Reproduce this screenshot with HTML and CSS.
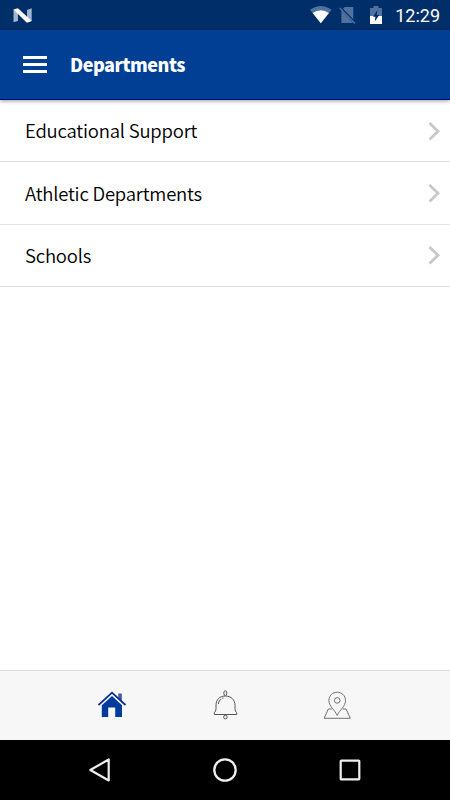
FILE: index.html
```html
<!DOCTYPE html>
<html lang="en">
<head>
<meta charset="UTF-8" />
<meta name="viewport" content="width=device-width, initial-scale=1.0" />
<title>Departments</title>
<link rel="stylesheet" href="styles.css">
</head>
<body>

<!-- Status bar -->
<div class="status-bar">
  <svg class="logo" width="20" height="16" viewBox="0 0 20 16">
    <path d="M0.5 1.5L5 0.8V13L0.5 14.2ZM14 2L18.7 0.2V13L14 14.2Z" fill="#9fb4cf"/>
    <path d="M0.7 1.8Q3 0.2 5.2 0.4L18.5 12.8Q16.5 14.6 13.6 14.4Z" fill="#fff"/>
  </svg>
  <div class="status-icons">
    <svg width="22" height="18" viewBox="0 0 22 18">
      <path d="M0 3.8Q10.8 -3.8 21.6 3.8L10.8 17.2Z" fill="#4f72a0"/>
      <path d="M2.7 7.1Q10.8 1.6 18.9 7.1L10.8 17.2Z" fill="#fff"/>
    </svg>
    <svg class="sim" width="18" height="18" viewBox="0 0 18 18">
      <path d="M4 2.8L5.7 1H14.3V13.2ZM2.4 4.6L14 17H2.4Z" fill="#4f72a0"/>
      <path d="M0.7 2L16 17.4" stroke="#4f72a0" stroke-width="1.4"/>
    </svg>
    <svg class="battery" width="12" height="18" viewBox="0 0 12 18">
      <path d="M0 2H3.5V0H8.5V2H12V10H0Z" fill="#4f72a0"/>
      <path d="M0 10H12V18H0Z" fill="#fff"/>
      <path d="M7.4 4L3 10.8H5.4L4.8 15.6L9.2 9H6.8Z" fill="#002e69"/>
    </svg>
    <span class="clock">12:29</span>
  </div>
</div>

<!-- Header -->
<header class="header">
  <div class="menu-btn">
    <span></span>
    <span></span>
    <span></span>
  </div>
  <h1>Departments</h1>
</header>

<!-- List -->
<ul class="list">
  <li>
    <span>Educational Support</span>
    <svg width="12" height="20" viewBox="0 0 12 20"><path d="M1.5 2L10 10.3L1.5 18.6" fill="none" stroke="#c8c8c8" stroke-width="2.8"/></svg>
  </li>
  <li>
    <span>Athletic Departments</span>
    <svg width="12" height="20" viewBox="0 0 12 20"><path d="M1.5 2L10 10.3L1.5 18.6" fill="none" stroke="#c8c8c8" stroke-width="2.8"/></svg>
  </li>
  <li>
    <span>Schools</span>
    <svg width="12" height="20" viewBox="0 0 12 20"><path d="M1.5 2L10 10.3L1.5 18.6" fill="none" stroke="#c8c8c8" stroke-width="2.8"/></svg>
  </li>
</ul>

<!-- Tabs -->
<nav class="tabs">
  <div class="tab">
    <svg width="30" height="32" viewBox="0 0 30 32">
      <path d="M20.3 3.5H23.8V11L20.3 8Z" fill="#41579f"/>
      <path d="M0.5 15L14 2.7L27.5 15" fill="none" stroke="#0a2c98" stroke-width="1.8"/>
      <path d="M14 6L24 15.3V27H17.2V17.5H10.2V27H3.8V15.3Z" fill="#003c9c"/>
    </svg>
  </div>
  <div class="tab">
    <svg width="30" height="32" viewBox="0 0 30 32" fill="none" stroke="#555" stroke-width="1">
      <ellipse cx="15.3" cy="3.1" rx="1.5" ry="2.4"/>
      <path d="M4.3 24.5V22.8Q6 21.3 6 18.5V15.5C6 9.5 9.7 6 15.3 6S25 9.5 25 15.5V18.5Q25 21.3 26.7 22.8V24.5Z"/>
      <path d="M8.3 14Q8.8 10.4 11.2 9M12.2 8.4L13.5 7.9"/>
      <circle cx="15.4" cy="27.1" r="1.8"/>
    </svg>
  </div>
  <div class="tab">
    <svg width="30" height="32" viewBox="0 0 30 32" fill="none" stroke="#707070" stroke-width="1">
      <path d="M14.2 25.4C11.8 20 5.9 16.5 5.9 10.5C5.9 5.8 9.5 2.2 14.2 2.2S22.5 5.8 22.5 10.5C22.5 16.5 16.6 20 14.2 25.4Z"/>
      <circle cx="14.2" cy="10.4" r="2.8"/>
      <path d="M8.6 19H5.3L1.1 28.3H27.3L23.1 19H19.8"/>
    </svg>
  </div>
</nav>

<!-- System buttons -->
<div class="system-nav">
  <svg width="24" height="26" viewBox="0 0 24 26"><path d="M20.7 2.5V23.5L2.3 13Z" fill="none" stroke="#eee" stroke-width="2.2" stroke-linejoin="round"/></svg>
  <svg width="24" height="26" viewBox="0 0 24 26"><circle cx="12" cy="13" r="10.7" fill="none" stroke="#eee" stroke-width="2.3"/></svg>
  <svg width="24" height="26" viewBox="0 0 24 26"><rect x="2.7" y="3.7" width="18.6" height="18.6" rx="0.6" fill="none" stroke="#eee" stroke-width="2.2"/></svg>
</div>

</body>
</html>
```
FILE: styles.css
```css
* {
  box-sizing: border-box;
}
body {
  margin: 0;
  height: 100vh;
  display: flex;
  flex-direction: column;
  font-family: "Noto Sans CJK SC", "Noto Sans", sans-serif;
  background: #fff;
  color: #000;
}
svg {
  display: block;
}

/* Status bar */
.status-bar {
  height: 30px;
  flex: none;
  display: flex;
  align-items: center;
  justify-content: space-between;
  padding: 0 10px 0 13px;
  background: #002e69;
}
.logo {
  margin-top: 1px;
}
.status-icons {
  display: flex;
  align-items: center;
}
.sim {
  margin-left: 7px;
}
.battery {
  margin-left: 13px;
}
.clock {
  margin-left: 13px;
  font: 400 18px/30px Roboto, sans-serif;
  color: #fff;
  padding-top: 1px;
}

/* Header */
.header {
  height: 70px;
  flex: none;
  display: flex;
  align-items: center;
  padding-left: 23px;
  background: #003f94;
  border-bottom: 1px solid #000c80;
  box-shadow: 0 1px 4px rgba(0, 0, 0, .4);
  z-index: 1;
}
.menu-btn {
  width: 24px;
  display: grid;
  gap: 4px;
}
.menu-btn span {
  height: 3px;
  background: #fff;
}
.header h1 {
  margin: 0 0 1px 23px;
  font-size: 18px;
  line-height: 28px;
  font-weight: 900;
  letter-spacing: -.45px;
  color: #fff;
}

/* List */
.list {
  list-style: none;
  margin: 0;
  padding: 0;
  flex: 1;
}
.list li {
  height: 62.5px;
  display: flex;
  align-items: center;
  justify-content: space-between;
  padding: 0 10px 0 25px;
  border-bottom: 1px solid #e3e3e3;
  font-size: 18.5px;
  font-weight: 350;
  line-height: 26px;
  letter-spacing: -.2px;
}
.list li:first-child {
  height: 62px;
}
.list li:first-child span {
  padding-bottom: 2px;
}

/* Tabs */
.tabs {
  height: 70px;
  flex: none;
  display: grid;
  grid-template-columns: repeat(3, 112.5px);
  justify-content: center;
  align-items: center;
  background: #f7f7f7;
  border-top: 1px solid #dcdcdc;
}
.tab {
  display: flex;
  justify-content: center;
}

/* System buttons */
.system-nav {
  height: 60px;
  flex: none;
  display: grid;
  grid-template-columns: repeat(3, 125px);
  justify-content: center;
  justify-items: center;
  align-items: center;
  background: #000;
}
```
